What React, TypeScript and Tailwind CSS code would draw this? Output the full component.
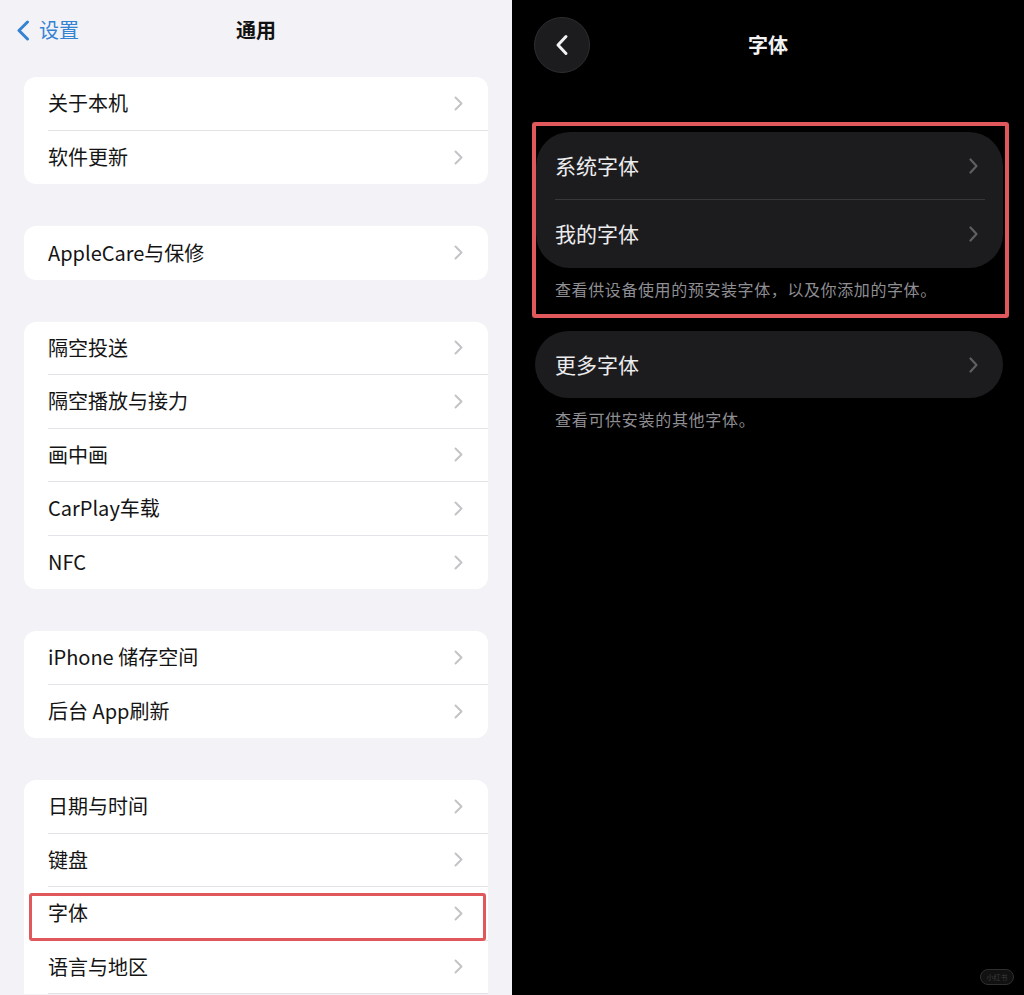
import React from "react";

const FONT = { fontFamily: '"Noto Sans CJK SC", "Noto Sans", sans-serif' };

function ChevronLight() {
  return (
    <svg width="9" height="15" viewBox="0 0 9 15" fill="none">
      <polyline points="1.5,1.5 7.5,7.5 1.5,13.5" stroke="#c4c4c8" strokeWidth="2" strokeLinecap="round" strokeLinejoin="round" />
    </svg>
  );
}

function ChevronDark() {
  return (
    <svg width="9" height="16" viewBox="0 0 9 16" fill="none">
      <polyline points="1.5,1.5 7.5,8 1.5,14.5" stroke="#5e5e63" strokeWidth="2.2" strokeLinecap="round" strokeLinejoin="round" />
    </svg>
  );
}

function Row({ label, divider = true, highlight = false }: { label: string; divider?: boolean; highlight?: boolean }) {
  return (
    <div className="relative h-[53.5px] pl-[24px]">
      <div className={`h-full flex items-center justify-between pr-[25px] ${divider ? "border-b border-[#e3e3e8]" : ""}`}>
        <span className="text-[20px] text-[#141414]">{label}</span>
        <ChevronLight />
      </div>
      {highlight && (
        <div className="absolute left-[5px] right-[2px] top-[6px] bottom-[0px] border-[3px] border-[#e0585c] rounded-[3px]" />
      )}
    </div>
  );
}

function Card({ items, openEnd = false, highlightIndex = -1 }: { items: string[]; openEnd?: boolean; highlightIndex?: number }) {
  return (
    <div className={`mx-[24px] bg-white ${openEnd ? "rounded-t-[12px]" : "rounded-[12px]"}`}>
      {items.map((it, i) => (
        <Row key={it} label={it} divider={openEnd || i < items.length - 1} highlight={i === highlightIndex} />
      ))}
    </div>
  );
}

function DarkRow({ label, divider = false }: { label: string; divider?: boolean }) {
  return (
    <div className="h-[68px] pl-[19px] pr-[18px]">
      <div className={`h-full flex items-center justify-between pr-[7px] ${divider ? "border-b border-[#38383b]" : ""}`}>
        <span className="text-[21px] text-[#ececee]">{label}</span>
        <ChevronDark />
      </div>
    </div>
  );
}

export default function App() {
  return (
    <div className="w-[1024px] h-[995px] flex overflow-hidden" style={FONT}>
      {/* Left panel */}
      <div className="w-[512px] h-full bg-[#f2f2f7] overflow-hidden">
        <div className="h-[60px] grid grid-cols-3 items-center">
          <div className="flex items-center pl-[16px] gap-[9px]">
            <svg width="14" height="21" viewBox="0 0 14 21" fill="none">
              <polyline points="11.5,2 3,10.5 11.5,19" stroke="#3483d3" strokeWidth="3" strokeLinecap="round" strokeLinejoin="round" />
            </svg>
            <span className="text-[20px] text-[#3483d3]">设置</span>
          </div>
          <div className="text-center text-[20px] font-semibold text-[#111]">通用</div>
          <div />
        </div>
        <div className="mt-[17px] flex flex-col gap-[42px]">
          <Card items={["关于本机", "软件更新"]} />
          <Card items={["AppleCare与保修"]} />
          <Card items={["隔空投送", "隔空播放与接力", "画中画", "CarPlay车载", "NFC"]} />
          <Card items={["iPhone 储存空间", "后台 App刷新"]} />
          <Card items={["日期与时间", "键盘", "字体", "语言与地区"]} openEnd highlightIndex={2} />
        </div>
      </div>

      {/* Right panel */}
      <div className="flex-1 h-full bg-black relative">
        <div className="h-[90px] relative flex items-center justify-center">
          <div className="absolute left-[22px] top-[17px] w-[56px] h-[56px] rounded-full bg-[#1c1c1e] border border-[#2e2e31] flex items-center justify-center">
            <svg width="14" height="22" viewBox="0 0 14 22" fill="none">
              <polyline points="11,2.5 3,11 11,19.5" stroke="#f2f2f2" strokeWidth="3" strokeLinecap="round" strokeLinejoin="round" />
            </svg>
          </div>
          <span className="text-[20px] font-semibold text-[#f2f2f2]">字体</span>
        </div>

        <div className="mt-[32px] ml-[20px] w-[477px] border-[4px] border-[#e0585c] rounded-[3px] pt-[6px] pb-[13px]">
          <div className="w-[467px] bg-[#1c1c1e] rounded-[34px] overflow-hidden">
            <DarkRow label="系统字体" divider />
            <DarkRow label="我的字体" />
          </div>
          <div className="mt-[9px] pl-[19px] leading-[24px] text-[16px] tracking-[0.6px] text-[#8e8e93]">
            查看供设备使用的预安装字体，以及你添加的字体。
          </div>
        </div>

        <div className="mt-[13px] ml-[23px] w-[468px] h-[67px] bg-[#1c1c1e] rounded-[34px] flex items-center justify-between pl-[20px] pr-[25px]">
          <span className="text-[21px] text-[#ececee]">更多字体</span>
          <ChevronDark />
        </div>
        <div className="mt-[9px] ml-[43px] leading-[24px] text-[16px] tracking-[0.7px] text-[#8e8e93]">查看可供安装的其他字体。</div>

        <div className="absolute right-[10px] bottom-[10px] w-[34px] h-[16px] rounded-full border border-[#2f2f2f] bg-[#111] flex items-center justify-center">
          <span className="text-[7px] leading-none text-[#3c3c3c]">小红书</span>
        </div>
      </div>
    </div>
  );
}
